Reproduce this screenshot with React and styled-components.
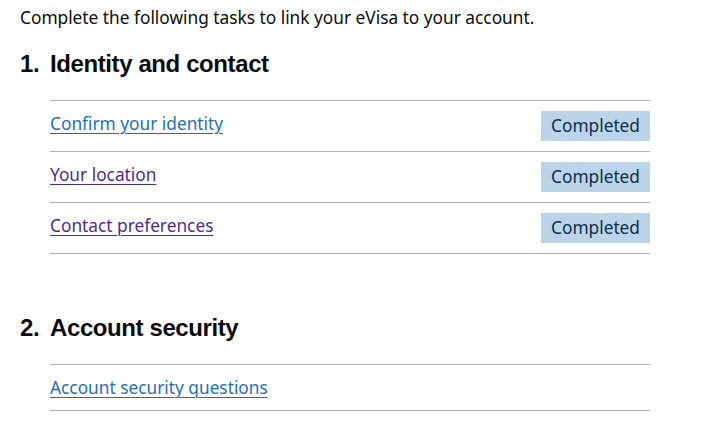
import React from 'react';
import styled, { createGlobalStyle } from 'styled-components';

const GlobalStyle = createGlobalStyle`
  body {
    margin: 0;
    background: #ffffff;
    font-family: "Noto Sans", "Liberation Sans", Arial, sans-serif;
    color: #0b0c0c;
  }
`;

const Page = styled.main`
  padding: 0 20px;
  width: 712px;
  box-sizing: border-box;
`;

const Intro = styled.p`
  margin: 0;
  padding-top: 5px;
  font-size: 17.3px;
  line-height: 25px;
`;

const Sections = styled.ol`
  list-style: none;
  margin: 0;
  padding: 0;
`;

const Section = styled.li`
  margin-top: ${(p) => p.$gap}px;
`;

const SectionHeading = styled.h2`
  display: flex;
  margin: 0 0 21px;
  font-family: "Liberation Sans", Arial, sans-serif;
  font-size: 24px;
  line-height: 30px;
  font-weight: 700;
  letter-spacing: -0.4px;
`;

const Number = styled.span`
  width: 30px;
  flex: none;
`;

const Tasks = styled.ul`
  list-style: none;
  margin: 0 0 0 30px;
  padding: 0;
  width: 600px;
  border-bottom: 1px solid #b1b4b6;
`;

const Task = styled.li`
  display: flex;
  align-items: flex-start;
  justify-content: space-between;
  min-height: 25px;
  padding: 10px 0;
  border-top: 1px solid #b1b4b6;
`;

const TaskLink = styled.a`
  font-size: 17.3px;
  line-height: 25px;
  color: ${(p) => (p.$visited ? '#4c2c92' : '#1d70b8')};
  text-decoration: underline;
  text-decoration-thickness: 1px;
  text-underline-offset: 3px;
`;

const Tag = styled.strong`
  display: inline-block;
  padding: 2px 10px;
  font-size: 17.3px;
  line-height: 26px;
  font-weight: 400;
  color: #0c2d4a;
  background: #bbd4ea;
`;

const sections = [
  {
    title: 'Identity and contact',
    gap: 19,
    tasks: [
      { name: 'Confirm your identity', status: 'Completed' },
      { name: 'Your location', status: 'Completed', visited: true },
      { name: 'Contact preferences', status: 'Completed', visited: true },
    ],
  },
  {
    title: 'Account security',
    gap: 59,
    tasks: [{ name: 'Account security questions' }],
  },
];

export default function App() {
  return (
    <>
      <GlobalStyle />
      <Page>
        <Intro>Complete the following tasks to link your eVisa to your account.</Intro>
        <Sections>
          {sections.map((s, i) => (
            <Section key={s.title} $gap={s.gap}>
              <SectionHeading>
                <Number>{i + 1}.</Number>
                {s.title}
              </SectionHeading>
              <Tasks>
                {s.tasks.map((t) => (
                  <Task key={t.name}>
                    <TaskLink href="#" $visited={t.visited}>
                      {t.name}
                    </TaskLink>
                    {t.status && <Tag>{t.status}</Tag>}
                  </Task>
                ))}
              </Tasks>
            </Section>
          ))}
        </Sections>
      </Page>
    </>
  );
}
